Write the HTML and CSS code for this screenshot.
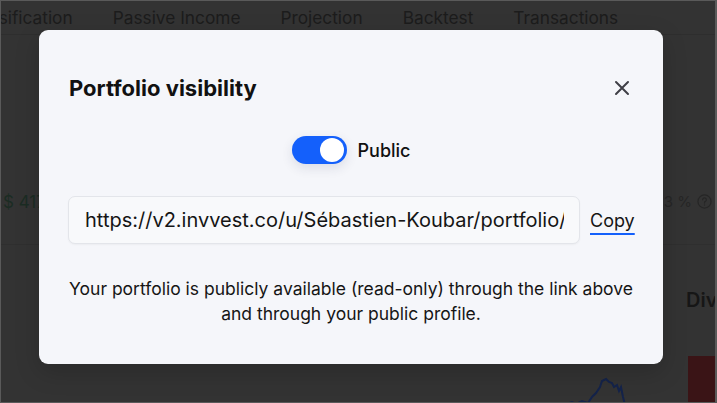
FILE: index.html
```html
<!DOCTYPE html>
<html lang="en">
<head>
<meta charset="utf-8">
<title>Portfolio visibility</title>
<link rel="stylesheet" href="styles.css">
</head>
<body>
<div class="frame">
  <header class="tabs">
    <span class="tab tab-cut">Classification</span>
    <span class="tab">Passive Income</span>
    <span class="tab">Projection</span>
    <span class="tab">Backtest</span>
    <span class="tab">Transactions</span>
  </header>
  <main class="page">
    <section class="stats">
      <div class="stat stat-left">$ 417 235</div>
      <div class="stat stat-right">3 %
        <svg class="help" viewBox="0 0 16 16" width="15" height="15"><circle cx="8" cy="8" r="7" fill="none" stroke="#262626" stroke-width="1.3"/><path d="M6 6.2a2 2 0 1 1 2.6 1.9c-.5.2-.6.5-.6 1v.6" fill="none" stroke="#262626" stroke-width="1.3" stroke-linecap="round"/><circle cx="8" cy="11.6" r=".8" fill="#262626"/></svg>
      </div>
    </section>
    <section class="lower">
      <div class="chart-card">
        <svg class="chart" viewBox="0 0 120 30" width="120" height="30"><path d="M0 30 L8 28 L14 29 L20 27 L24 29 L30 26 L36 28 L40 22 L44 18 L48 12 L50 6 L54 4 L57 7 L60 8 L62 12 L65 10 L67 16 L69 12 L71 22 L73 30" fill="none" stroke="#14234a" stroke-width="2"/></svg>
      </div>
      <div class="div-card">
        <h3 class="div-title">Dividends</h3>
        <div class="div-bar"></div>
      </div>
    </section>
  </main>

  <div class="overlay">
    <div class="modal">
      <div class="modal-head">
        <h2 class="modal-title">Portfolio visibility</h2>
        <button class="close" aria-label="Close">
          <svg viewBox="0 0 16 16" width="16" height="16"><path d="M2 2 L14 14 M14 2 L2 14" stroke="#3f3f46" stroke-width="2" stroke-linecap="round"/></svg>
        </button>
      </div>
      <div class="toggle-row">
        <span class="toggle"><span class="knob"></span></span>
        <span class="toggle-label">Public</span>
      </div>
      <div class="link-row">
        <div class="link-input"><span class="link-text">https://v2.invvest.co/u/Sébastien-Koubar/portfolio/</span></div>
        <span class="copy">Copy</span>
      </div>
      <p class="note">Your portfolio is publicly available (read-only) through the link above and through your public profile.</p>
    </div>
  </div>
</div>
</body>
</html>
```

FILE: styles.css
```css
* { box-sizing: border-box; }
html, body { margin: 0; padding: 0; }
body {
  font-family: Inter, "Noto Sans", "Liberation Sans", sans-serif;
  background: #333333;
}
.frame {
  position: relative;
  width: 717px;
  height: 403px;
  overflow: hidden;
  background: #333333;
  border: 1px solid #5a5a5a;
  border-right-width: 2px;
}
.tabs {
  display: flex;
  gap: 40px;
  height: 34px;
  align-items: center;
  margin-left: -38px;
  border-bottom: 1px solid #2e2e2e;
  color: #1c1c1c;
  font-size: 17.3px;
  white-space: nowrap;
}
.page {
  display: flex;
  flex-direction: column;
}
.stats {
  display: flex;
  justify-content: space-between;
  align-items: center;
  height: 210px;
  padding-top: 124px;
  border-bottom: 1px solid #2f2f2f;
}
.stat { font-size: 17px; white-space: nowrap; }
.stat-left { color: #1b2c23; margin-left: 2px; width: 36px; overflow: hidden; }
.stat-right { color: #262626; font-size: 15px; display: flex; align-items: center; gap: 5px; margin-right: 3px; }
.lower {
  display: flex;
  height: 160px;
}
.chart-card {
  flex: 1;
  display: flex;
  align-items: flex-end;
  justify-content: flex-end;
  padding-right: 14px;
}
.chart { display: block; }
.div-card {
  width: 29px;
  display: flex;
  flex-direction: column;
  overflow: hidden;
}
.div-title {
  margin: 43px 0 0 0;
  line-height: 24px;
  font-size: 20px;
  font-weight: 600;
  color: #161616;
  white-space: nowrap;
}
.div-bar {
  margin-top: 44px;
  margin-left: 2px;
  flex: 1;
  background: #3a1416;
}
.overlay {
  position: absolute;
  inset: 0;
}
.modal {
  position: absolute;
  left: 38px;
  top: 29px;
  width: 624px;
  height: 334px;
  background: #f5f6fa;
  border-radius: 9px;
  padding: 44px 29px 0 29px;
  display: flex;
  flex-direction: column;
  box-shadow: 0 8px 24px rgba(0,0,0,0.18);
}
.modal-head {
  display: flex;
  justify-content: space-between;
  align-items: center;
  height: 28px;
}
.modal-title {
  margin: 0 0 0 1px;
  font-size: 22px;
  font-weight: 700;
  color: #111111;
}
.close {
  border: 0;
  background: none;
  padding: 0;
  width: 24px;
  height: 24px;
  display: flex;
  align-items: center;
  justify-content: center;
}
.toggle-row {
  margin-top: 34px;
  display: flex;
  justify-content: center;
  align-items: center;
  gap: 11px;
  height: 28px;
}
.toggle {
  width: 55px;
  height: 28px;
  border-radius: 14px;
  background: #1460fb;
  display: flex;
  align-items: center;
  justify-content: flex-end;
  padding-right: 3px;
  box-shadow: 0 4px 12px rgba(30,40,80,0.12);
}
.knob {
  width: 24px;
  height: 24px;
  border-radius: 50%;
  background: #ffffff;
}
.toggle-label {
  font-size: 18px;
  font-weight: 500;
  color: #111111;
}
.link-row {
  margin-top: 32px;
  display: flex;
  align-items: center;
  gap: 10px;
}
.link-input {
  flex: 0 0 512px;
  width: 512px;
  height: 48px;
  border: 1px solid #e3e5ea;
  border-radius: 7px;
  background: #f8f9fb;
  padding: 0 15px 0 16px;
  display: flex;
  align-items: center;
  box-shadow: 0 1px 2px rgba(0,0,0,0.04);
}
.link-text {
  flex: 1;
  min-width: 0;
  overflow: hidden;
  white-space: nowrap;
  font-size: 20px;
  color: #151515;
}
.copy {
  flex: 0 0 auto;
  font-size: 18px;
  color: #151515;
  text-decoration: underline;
  text-decoration-color: #1460fb;
  text-decoration-thickness: 2px;
  text-underline-offset: 6px;
}
.note {
  margin: 32px 0 0 0;
  text-align: center;
  font-size: 17.5px;
  line-height: 25px;
  color: #151515;
}
```
